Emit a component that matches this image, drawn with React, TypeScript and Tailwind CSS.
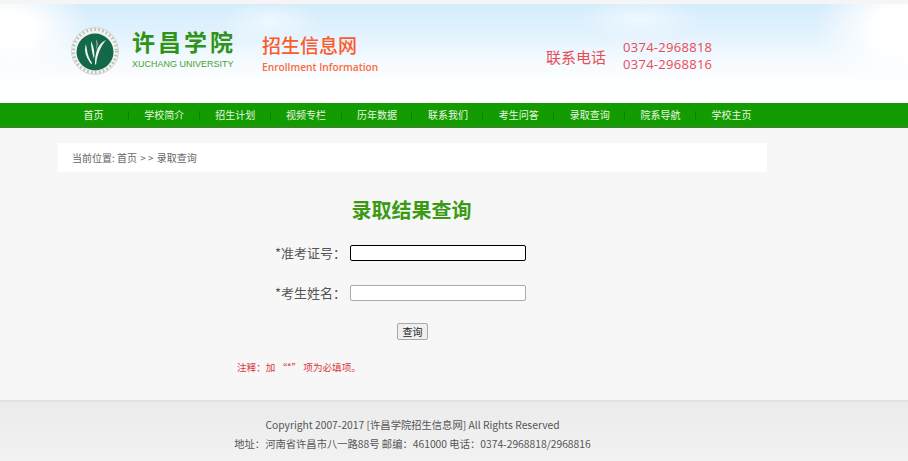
const navItems = [
  "首页",
  "学校简介",
  "招生计划",
  "视频专栏",
  "历年数据",
  "联系我们",
  "考生问答",
  "录取查询",
  "院系导航",
  "学校主页",
];

const cjk = "font-['Noto_Sans_CJK_SC','Noto_Sans',sans-serif]";

function Logo() {
  return (
    <svg width="48" height="48" viewBox="0 0 48 48" className="shrink-0">
      <circle cx="24" cy="24" r="23.5" fill="#f1f3ef" stroke="#d4d8d0" strokeWidth="1" />
      <circle cx="24" cy="24" r="21.5" fill="none" stroke="#8f9c8f" strokeWidth="3" strokeDasharray="1.5 2.5" opacity="0.6" />
      <circle cx="24" cy="25" r="18.5" fill="#14684a" />
      {/* leaf strokes */}
      <path d="M15 17c-2 6-1 12 5 20 1 0 1-1 1-1-4-6-5-12-6-19z" fill="#f3f6ee" />
      <path d="M20 14c0 6 1 12 3 18 1-6 0-12-3-18z" fill="#f3f6ee" />
      <path d="M35 13c-6 3-9 8-10 14-1 3-1 6-1 10l1 1c1-9 4-18 10-25z" fill="#f3f6ee" />
      <path d="M25 12c1 4 1 8 0 11 2-4 2-8 0-11z" fill="#f3f6ee" />
    </svg>
  );
}

function Header() {
  return (
    <header className="h-[99px] bg-[radial-gradient(ellipse_80px_55px_at_10px_25px,#ffffff_30%,transparent_100%),radial-gradient(ellipse_90px_65px_at_905px_25px,#ffffff_35%,transparent_100%),radial-gradient(ellipse_50px_20px_at_270px_18px,#eef8ff_0%,transparent_100%),radial-gradient(ellipse_60px_22px_at_640px_16px,#eef8ff_0%,transparent_100%),linear-gradient(to_bottom,#d4ecfc_0%,#e2f2fd_30%,#f3faff_55%,#fdfeff_78%,#ffffff_100%)] flex items-start">
      <div className="flex items-start pl-[71px] pt-[23px] w-full">
        <Logo />
        <div className="ml-[13px] w-[118px] -mt-[1px]">
          <div className={`${cjk} font-bold text-[23px] leading-[30px] tracking-[3px] text-[#2f9317]`}>许昌学院</div>
          <div className="font-['Liberation_Sans',sans-serif] text-[9px] leading-[12px] mt-[2px] text-[#4c9e2c] whitespace-nowrap">
            XUCHANG UNIVERSITY
          </div>
        </div>
        <div className="ml-[12px] pt-[5px] w-[284px]">
          <div className={`${cjk} font-medium text-[19px] leading-[26px] text-[#fb5b2c]`}>招生信息网</div>
          <div className="font-['Open_Sans',sans-serif] font-semibold text-[10.2px] leading-[14px] mt-[2px] text-[#fb6a3c] whitespace-nowrap">
            Enrollment Information
          </div>
        </div>
        <div className={`${cjk} text-[15px] leading-[20px] text-[#ea4a55] pt-[20px] w-[77px] whitespace-nowrap`}>联系电话</div>
        <div className="font-['Open_Sans',sans-serif] text-[13px] leading-[17px] tracking-[0.28px] text-[#ea4a55] pt-[12px]">
          <div>0374-2968818</div>
          <div>0374-2968816</div>
        </div>
      </div>
    </header>
  );
}

function Nav() {
  return (
    <nav className="h-[25px] bg-[#129c00] border-b-2 border-[#2f8a1f] pl-[58px] flex shadow-[0_1px_1px_#dddddd]">
      {navItems.map((item, i) => (
        <div key={item} className="relative w-[70.9px] flex items-center justify-center">
          <span className={`${cjk} text-[10px] leading-[23px] text-[#eaf7e4]`}>{item}</span>
          {i < navItems.length - 1 && (
            <span className="absolute right-0 top-[8px] h-[8px] w-px bg-[#0c7f00]" />
          )}
        </div>
      ))}
    </nav>
  );
}

function FormRow({ label, focused }: { label: string; focused?: boolean }) {
  return (
    <div className="flex items-center h-4">
      <label className={`${cjk} w-[292px] pr-[4px] text-right text-[13px] text-[#555555] whitespace-nowrap`}>
        {label}
      </label>
      <input
        type="text"
        className={
          focused
            ? "w-[176px] h-4 bg-white border border-black rounded-[2px]"
            : "w-[176px] h-4 bg-white border border-[#aaaaaa] rounded-[2px]"
        }
      />
    </div>
  );
}

function Main() {
  return (
    <main className="h-[272px] bg-[#f7f7f7] pt-[15px] pl-[58px]">
      <div className={`${cjk} w-[709px] h-[29px] bg-white pl-[14px] flex items-center text-[10px] text-[#666666] whitespace-pre`}>
        当前位置: 首页 <span className="mx-[1px]">&gt; &gt;</span> 录取查询
      </div>
      <h1 className={`${cjk} w-[707px] mt-[23px] text-center font-bold text-[20px] leading-[30px] text-[#3a9a14]`}>
        录取结果查询
      </h1>
      <div className="mt-[20px] flex flex-col gap-6">
        <FormRow label="*准考证号：" focused />
        <FormRow label="*考生姓名：" />
      </div>
      <div className="w-[709px] mt-[22px] pl-[339px]">
        <button className={`${cjk} w-[31px] h-[17px] flex items-center justify-center bg-[#efefef] border border-[#aaaaaa] rounded-[2px] text-[10px] text-[#222222]`}>
          查询
        </button>
      </div>
      <p className={`${cjk} mt-[19px] pl-[179px] text-[9.6px] leading-[16px] text-[#d9363e]`}>
        注释：加 “*” 项为必填项。
      </p>
    </main>
  );
}

function Footer() {
  return (
    <footer className="h-[61px] bg-[#eeeeee] border-t-2 border-[#e2e2e2] bg-gradient-to-b from-[#ebebeb] to-[#f2f2f2] pl-[58px]">
      <div className={`${cjk} w-[709px] pt-[13px] text-center text-[10.3px] leading-[19px] text-[#555555]`}>
        <div>Copyright 2007-2017 [许昌学院招生信息网] All Rights Reserved</div>
        <div>地址：河南省许昌市八一路88号 邮编：461000 电话：0374-2968818/2968816</div>
      </div>
    </footer>
  );
}

export default function App() {
  return (
    <div className="w-[908px] h-[461px] overflow-hidden bg-[#f5f5f5] pt-1">
      <Header />
      <Nav />
      <Main />
      <Footer />
    </div>
  );
}
